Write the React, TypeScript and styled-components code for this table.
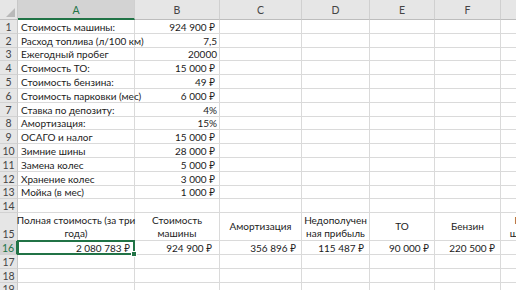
import React from 'react';
import styled, { createGlobalStyle, css } from 'styled-components';

const GlobalStyle = createGlobalStyle`
  html, body {
    margin: 0;
    padding: 0;
    background: #ffffff;
  }
  body {
    font-family: Lato, 'Noto Sans', 'Liberation Sans', sans-serif;
  }
`;

const GREEN = '#217346';
const GRID = '#dadada';

const COLS = ['A', 'B', 'C', 'D', 'E', 'F', 'G'];

const Sheet = styled.div`
  display: grid;
  grid-template-columns: 18px 117px 85px 82px 68px 65px 66px 80px;
  grid-template-rows: 20px repeat(14, 13.8px) 28px repeat(4, 13.8px);
  width: 516px;
  height: 290px;
  overflow: hidden;
  font-size: 10px;
  color: #1b1b1b;
  background: #fff;
`;

const Corner = styled.div`
  position: relative;
  background: #e6e6e6;
  border-right: 1px solid #c8c8c8;
  border-bottom: 1px solid #bdbdbd;

  &::after {
    content: '';
    position: absolute;
    right: 2px;
    bottom: 2px;
    width: 0;
    height: 0;
    border-left: 9px solid transparent;
    border-bottom: 9px solid #b9b9b9;
  }
`;

const ColHeader = styled.div<{ $selected?: boolean }>`
  display: flex;
  align-items: flex-end;
  justify-content: center;
  padding-bottom: 3px;
  background: #e6e6e6;
  border-right: 1px solid #d0d0d0;
  border-bottom: 1px solid #bdbdbd;
  color: #444;
  font-size: 10.5px;
  ${(p) =>
    p.$selected &&
    css`
      background: #d3d3d3;
      color: ${GREEN};
      border-bottom: 2px solid ${GREEN};
      padding-bottom: 2px;
    `}
`;

const RowHeader = styled.div<{ $selected?: boolean }>`
  display: flex;
  align-items: flex-end;
  justify-content: center;
  background: #e6e6e6;
  border-right: 1px solid #c8c8c8;
  border-bottom: 1px solid #d2d2d2;
  color: #444;
  font-size: 10.5px;
  line-height: 12px;
  ${(p) =>
    p.$selected &&
    css`
      background: #d3d3d3;
      color: ${GREEN};
      border-right: 2px solid ${GREEN};
    `}
`;

const Cell = styled.div<{ $align?: 'left' | 'right' | 'center'; $pad?: number; $active?: boolean }>`
  position: relative;
  display: flex;
  align-items: flex-end;
  justify-content: ${(p) =>
    p.$align === 'right' ? 'flex-end' : p.$align === 'center' ? 'center' : 'flex-start'};
  padding: 0 ${(p) => (p.$align === 'right' ? p.$pad ?? 3 : 2)}px 0 ${(p) =>
      p.$align === 'left' ? 3 : 2}px;
  border-right: 1px solid ${GRID};
  border-bottom: 1px solid ${GRID};
  white-space: nowrap;
  line-height: 12px;
  min-width: 0;
  ${(p) =>
    p.$active &&
    css`
      &::after {
        content: '';
        position: absolute;
        left: -1px;
        top: -1px;
        right: -1px;
        bottom: -1px;
        border: 2px solid ${GREEN};
        pointer-events: none;
      }
      &::before {
        content: '';
        position: absolute;
        right: -3px;
        bottom: -3px;
        width: 4px;
        height: 4px;
        background: ${GREEN};
        border: 1px solid #fff;
        z-index: 2;
      }
    `}
`;

const HeadCell = styled(Cell)`
  align-items: center;
  justify-content: center;
  text-align: center;
  white-space: normal;
  overflow: visible;
`;

const Lines = styled.span`
  display: block;
  line-height: 13px;
  white-space: nowrap;
`;

type Row = { label: string; value: string; pad?: number };

const params: Row[] = [
  { label: 'Стоимость машины:', value: '924 900 ₽', pad: 4 },
  { label: 'Расход топлива (л/100 км)', value: '7,5', pad: 2 },
  { label: 'Ежегодный пробег', value: '20000', pad: 2 },
  { label: 'Стоимость ТО:', value: '15 000 ₽', pad: 4 },
  { label: 'Стоимость бензина:', value: '49 ₽', pad: 4 },
  { label: 'Стоимость парковки (мес)', value: '6 000 ₽', pad: 4 },
  { label: 'Ставка по депозиту:', value: '4%', pad: 2 },
  { label: 'Амортизация:', value: '15%', pad: 2 },
  { label: 'ОСАГО и налог', value: '15 000 ₽', pad: 4 },
  { label: 'Зимние шины', value: '28 000 ₽', pad: 4 },
  { label: 'Замена колес', value: '5 000 ₽', pad: 4 },
  { label: 'Хранение колес', value: '3 000 ₽', pad: 4 },
  { label: 'Мойка (в мес)', value: '1 000 ₽', pad: 4 },
];

const totalsHead: string[][] = [
  ['Полная стоимость (за три', 'года)'],
  ['Стоимость', 'машины'],
  ['Амортизация'],
  ['Недополучен', 'ная прибыль'],
  ['ТО'],
  ['Бензин'],
  ['Парковка и', 'шиномонтаж'],
];

const totals = ['2 080 783 ₽', '924 900 ₽', '356 896 ₽', '115 487 ₽', '90 000 ₽', '220 500 ₽', '72 000 ₽'];
const totalsPad = [4, 7, 5, 5, 5, 5, 5];

const EmptyRow = ({ n }: { n: number }) => (
  <>
    <RowHeader>{n}</RowHeader>
    {COLS.map((c) => (
      <Cell key={c} />
    ))}
  </>
);

export default function App() {
  return (
    <>
      <GlobalStyle />
      <Sheet>
        <Corner />
        {COLS.map((c) => (
          <ColHeader key={c} $selected={c === 'A'}>
            {c}
          </ColHeader>
        ))}

        {params.map((r, i) => (
          <React.Fragment key={r.label}>
            <RowHeader>{i + 1}</RowHeader>
            <Cell $align="left">{r.label}</Cell>
            <Cell $align="right" $pad={r.pad}>
              {r.value}
            </Cell>
            {COLS.slice(2).map((c) => (
              <Cell key={c} />
            ))}
          </React.Fragment>
        ))}

        <EmptyRow n={14} />

        <RowHeader>15</RowHeader>
        {totalsHead.map((lines, i) => (
          <HeadCell key={i}>
            <Lines>
              {lines.map((l, j) => (
                <React.Fragment key={j}>
                  {j > 0 && <br />}
                  {l}
                </React.Fragment>
              ))}
            </Lines>
          </HeadCell>
        ))}

        <RowHeader $selected>16</RowHeader>
        {totals.map((t, i) => (
          <Cell key={t} $align="right" $pad={totalsPad[i]} $active={i === 0}>
            {t}
          </Cell>
        ))}

        {[17, 18, 19].map((n) => (
          <EmptyRow key={n} n={n} />
        ))}
      </Sheet>
    </>
  );
}
